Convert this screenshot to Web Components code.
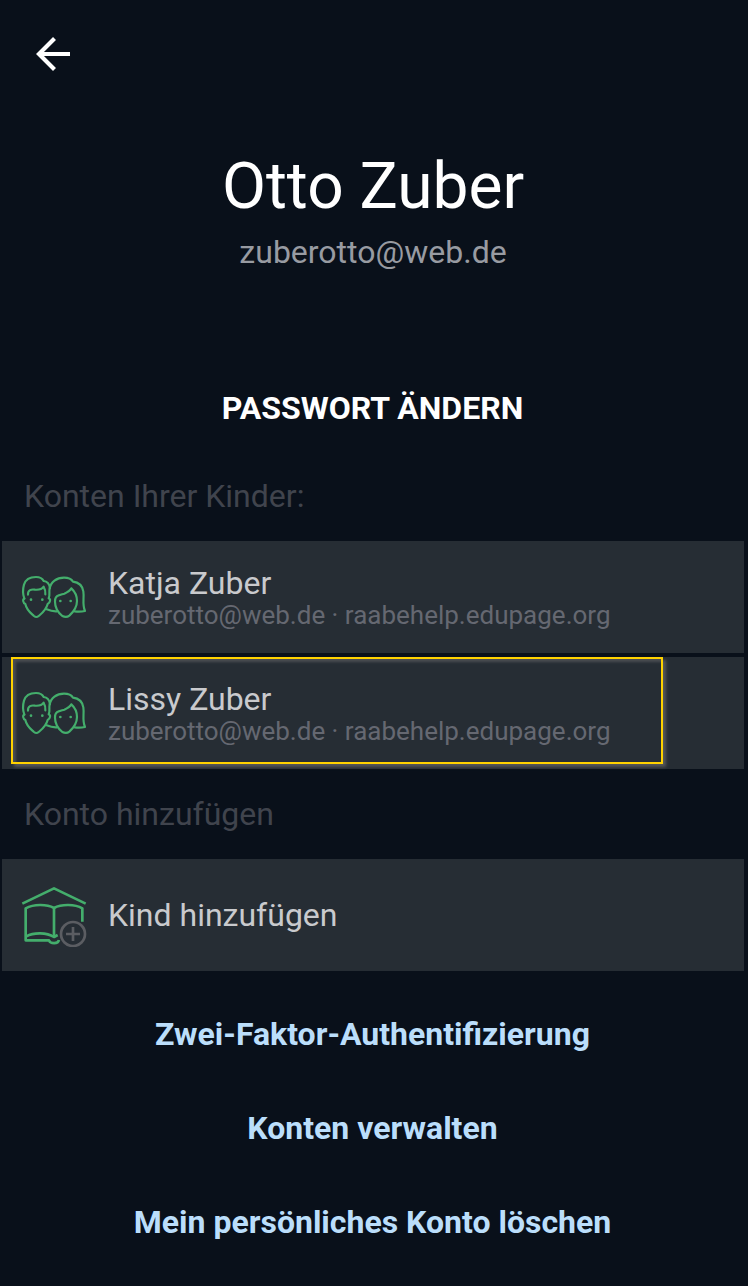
<!DOCTYPE html>
<html lang="de">
<head>
  <meta charset="UTF-8">
  <meta name="viewport" content="width=device-width, initial-scale=1.0">
  <title>Konto</title>
  <style>
    :root {
      --bg: #09101a;
      --card: #262d34;
      --white: #ffffff;
      --name: #c9cacd;
      --muted: #989ba2;
      --faint: #656871;
      --section: #40444d;
      --link: #bbdefb;
      --green: #44ae6c;
      --highlight: #ffd200;
    }

    body {
      margin: 0;
      background-color: var(--bg);
      font-family: Roboto, "Liberation Sans", sans-serif;
      font-size: 32px;
    }
  </style>
</head>
<body>
  <account-page>
    <profile-header name="Otto Zuber" email="zuberotto@web.de"></profile-header>
    <text-action class="password">PASSWORT ÄNDERN</text-action>

    <account-section label="Konten Ihrer Kinder:">
      <account-card name="Katja Zuber" detail="zuberotto@web.de · raabehelp.edupage.org">
        <family-icon slot="icon"></family-icon>
      </account-card>
      <account-card name="Lissy Zuber" detail="zuberotto@web.de · raabehelp.edupage.org" marked>
        <family-icon slot="icon"></family-icon>
      </account-card>
    </account-section>

    <account-section label="Konto hinzufügen">
      <account-card name="Kind hinzufügen">
        <school-icon slot="icon"></school-icon>
      </account-card>
    </account-section>

    <link-list>
      <text-action link>Zwei-Faktor-Authentifizierung</text-action>
      <text-action link>Konten verwalten</text-action>
      <text-action link>Mein persönliches Konto löschen</text-action>
    </link-list>
  </account-page>

  <script>
    class BaseElement extends HTMLElement {
      constructor() {
        super()
        this.attachShadow({ mode: "open" })
      }

      connectedCallback() {
        this.shadowRoot.innerHTML = `
          <style>${this.constructor.styles}</style>
          ${this.render()}
        `
      }
    }

    class AccountPage extends BaseElement {
      static get styles() {
        return `
          :host {
            display: flex;
            flex-direction: column;
            box-sizing: border-box;
            width: 748px;
            height: 1286px;
            overflow: hidden;
          }

          ::slotted(.password) {
            margin-block: 117px 24px;
          }
        `
      }

      render() {
        return `<slot></slot>`
      }
    }

    class ProfileHeader extends BaseElement {
      static get styles() {
        return `
          :host {
            display: flex;
            flex-direction: column;
          }

          .header__back {
            display: block;
            flex: none;
            width: 34px;
            height: 34px;
            margin: 37px 0 0 36px;
          }

          .header__name {
            margin: 78px 2px 0 0;
            color: var(--white);
            font-size: 64px;
            font-weight: 400;
            line-height: 76px;
            text-align: center;
          }

          .header__email {
            margin: 7px 2px 0 0;
            color: var(--muted);
            line-height: 40px;
            text-align: center;
          }
        `
      }

      render() {
        return `
          <svg class="header__back" viewBox="0 0 34 34" fill="none" stroke="#fff" stroke-width="4.2">
            <path d="M34 17H3M18.500 1.500L3 17l15.500 15.500"/>
          </svg>
          <h1 class="header__name">${this.getAttribute("name")}</h1>
          <p class="header__email">${this.getAttribute("email")}</p>
        `
      }
    }

    class TextAction extends BaseElement {
      static get styles() {
        return `
          :host {
            display: block;
            padding-right: 3px;
            color: var(--white);
            font-weight: 700;
            line-height: 38px;
            text-align: center;
          }

          :host([link]) {
            color: var(--link);
          }
        `
      }

      render() {
        return `<slot></slot>`
      }
    }

    class AccountSection extends BaseElement {
      static get styles() {
        return `
          :host {
            display: block;
          }

          .section__label {
            margin: 0;
            padding-left: 24px;
            color: var(--section);
            font-size: 32px;
            font-weight: 400;
            line-height: 90px;
          }

          .section__cards {
            display: flex;
            flex-direction: column;
            gap: 4px;
            padding: 0 4px 0 2px;
          }
        `
      }

      render() {
        return `
          <h2 class="section__label">${this.getAttribute("label")}</h2>
          <div class="section__cards"><slot></slot></div>
        `
      }
    }

    class AccountCard extends BaseElement {
      static get styles() {
        return `
          :host {
            position: relative;
            display: flex;
            align-items: center;
            gap: 18px;
            box-sizing: border-box;
            height: 112px;
            padding-left: 18px;
            background-color: var(--card);
          }

          .card__name,
          .card__detail {
            margin: 0;
          }

          .card__name {
            color: var(--name);
            line-height: 38px;
          }

          .card__detail {
            padding-bottom: 2px;
            color: var(--faint);
            font-size: 26px;
            line-height: 26px;
          }

          /* frame drawn over the card, with a soft shadow on both sides of its line */
          .card__frame {
            position: absolute;
            left: 9px;
            top: 0;
            box-sizing: border-box;
            width: 652px;
            height: 107px;
            border: 2px solid var(--highlight);
            box-shadow: 3px 3px 3px #55575a, inset 3px 3px 3px #4b4e52;
          }
        `
      }

      render() {
        const detail = this.getAttribute("detail")
        return `
          <slot name="icon"></slot>
          <div class="card__texts">
            <p class="card__name">${this.getAttribute("name")}</p>
            ${detail ? `<p class="card__detail">${detail}</p>` : ""}
          </div>
          ${this.hasAttribute("marked") ? `<div class="card__frame"></div>` : ""}
        `
      }
    }

    class FamilyIcon extends BaseElement {
      static get styles() {
        return `
          :host {
            display: block;
            width: 70px;
            height: 52px;
          }

          svg {
            display: block;
            width: 68px;
            height: 52px;
          }
        `
      }

      render() {
        return `
          <svg viewBox="60 123 204 156" fill="none" stroke="var(--green)" stroke-width="6.5" stroke-linecap="round" stroke-linejoin="round">
            <path d="M73 206C69 195 68 178 72 164C77 147 91 141 108 141C119 141 127 145 131 153C142 154 148 162 150 174"/>
            <path d="M73 206C67 207 69 219 76 222C80 241 91 248 102 258Q109 264 116 258C128 248 138 241 143 222C151 218 153 206 146 205C151 196 146 186 149 176C152 155 170 143 192 143C205 143 215 148 219 155C237 157 247 167 250 184C253 204 246 223 255 243Q240 246 224 244"/>
            <path d="M84 194C83 180 94 177 105 179C117 180 127 176 131 170C135 177 137 183 136 193"/>
            <path d="M140 238Q156 245 171 244"/>
            <path d="M165 215C164 195 180 195 193 191C203 187 211 181 214 175C224 184 231 198 231 213C231 234 220 246 208 257Q199 264 187 258C175 248 165 235 165 215Z"/>
            <g fill="var(--green)" stroke="none">
              <circle cx="93" cy="209" r="4"/>
              <circle cx="127" cy="209" r="4"/>
              <circle cx="181" cy="213" r="4"/>
              <circle cx="212" cy="213" r="4"/>
            </g>
          </svg>
        `
      }
    }

    class SchoolIcon extends BaseElement {
      static get styles() {
        return `
          :host {
            display: block;
            width: 70px;
            height: 64px;
          }

          svg {
            display: block;
            width: 68px;
            height: 64px;
          }
        `
      }

      render() {
        return `
          <svg viewBox="60 99 204 192" fill="none" stroke="var(--green)" stroke-width="8" stroke-linejoin="round">
            <path d="M67 161L162 115L257 161"/>
            <path d="M162 262V174C140 162 101 162 77 175V271H147C151 282 174 283 177 270"/>
            <path d="M162 174C184 162 225 162 247 175V215"/>
            <path d="M79 259C101 247 140 247 162 261L173 255"/>
            <g stroke="#5b5d62">
              <circle cx="219" cy="252" r="36"/>
              <path d="M219 231V273M198 252H240"/>
            </g>
          </svg>
        `
      }
    }

    class LinkList extends BaseElement {
      static get styles() {
        return `
          :host {
            display: flex;
            flex-direction: column;
            gap: 56px;
            padding-top: 44px;
          }
        `
      }

      render() {
        return `<slot></slot>`
      }
    }

    customElements.define("account-page", AccountPage)
    customElements.define("profile-header", ProfileHeader)
    customElements.define("text-action", TextAction)
    customElements.define("account-section", AccountSection)
    customElements.define("account-card", AccountCard)
    customElements.define("family-icon", FamilyIcon)
    customElements.define("school-icon", SchoolIcon)
    customElements.define("link-list", LinkList)
  </script>
</body>
</html>
